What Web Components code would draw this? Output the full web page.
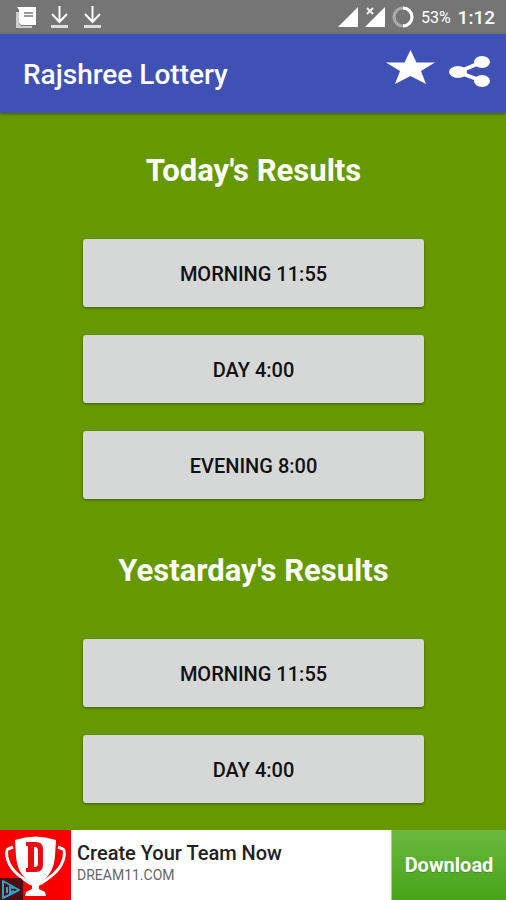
<!DOCTYPE html>
<html lang="en">
<head>
<meta charset="utf-8">
<meta name="viewport" content="width=device-width, initial-scale=1">
<title>Rajshree Lottery</title>
<style>
  body {
    margin: 0;
    font-family: Roboto, "Noto Sans", sans-serif;
    background: #669900;
  }
</style>
</head>
<body>
<lottery-app>
  <status-bar slot="status" battery="53%" time="1:12"></status-bar>
  <app-bar slot="header">Rajshree Lottery</app-bar>
  <result-section heading="Today's Results">
    <result-button>MORNING 11:55</result-button>
    <result-button>DAY 4:00</result-button>
    <result-button>EVENING 8:00</result-button>
  </result-section>
  <result-section heading="Yestarday's Results">
    <result-button>MORNING 11:55</result-button>
    <result-button>DAY 4:00</result-button>
  </result-section>
  <ad-banner slot="footer" action="Download">
    <span slot="title">Create Your Team Now</span>
    <span slot="site">DREAM11.COM</span>
  </ad-banner>
</lottery-app>

<script>
function attachTemplate(host, html) {
  const template = document.createElement("template");
  template.innerHTML = html;
  host.attachShadow({ mode: "open" });
  host.shadowRoot.appendChild(template.content.cloneNode(true));
}

class LotteryApp extends HTMLElement {
  constructor() {
    super();
    attachTemplate(this, `
      <style>
        :host {
          display: flex;
          flex-direction: column;
          min-height: 100vh;
        }
        main {
          flex: 1;
          display: flex;
          flex-direction: column;
          gap: 52px;
          padding: 38px 82px 27px 83px;
        }
      </style>
      <slot name="status"></slot>
      <slot name="header"></slot>
      <main><slot></slot></main>
      <slot name="footer"></slot>
    `);
  }
}

class StatusBar extends HTMLElement {
  constructor() {
    super();
    attachTemplate(this, `
      <style>
        :host {
          display: flex;
          align-items: center;
          justify-content: space-between;
          height: 34px;
          padding: 0 11px 0 16px;
          background: #757575;
          color: #fff;
        }
        .group {
          display: flex;
          align-items: center;
        }
        .notices { gap: 14px; }
        .system { gap: 7px; }
        svg { display: block; }
        .battery { font-size: 16px; }
        .time { font-size: 19px; font-weight: 500; }
      </style>
      <div class="group notices">
        <svg width="20" height="22" viewBox="0 0 20 22">
          <path d="M0 6h3v12l2 2h11v2H0z" fill="#ccc"/>
          <path d="M1 1h19v18H5l-2-2V4z" fill="#fff"/>
          <path d="M8 6h9v2H8zM8 9h9v2H8z" fill="#999"/>
        </svg>
        <svg width="19" height="24" viewBox="0 0 19 24" fill="none" stroke="#fff" stroke-width="2">
          <path d="M9.500 1v15M2 9l7.500 8L17 9"/>
          <path d="M1 21.500h17" stroke-width="3" stroke="#ddd"/>
        </svg>
        <svg width="19" height="24" viewBox="0 0 19 24" fill="none" stroke="#fff" stroke-width="2">
          <path d="M9.500 1v15M2 9l7.500 8L17 9"/>
          <path d="M1 21.500h17" stroke-width="3" stroke="#ddd"/>
        </svg>
      </div>
      <div class="group system">
        <svg width="20" height="20" viewBox="0 0 20 20" fill="#fff"><path d="M0 20L20 0v20z"/></svg>
        <svg width="20" height="20" viewBox="0 0 20 20">
          <path d="M0 20L20 0v20z" fill="#fff"/>
          <path d="M2 1l6 6M8 1L2 7" stroke="#757575" stroke-width="5"/>
          <path d="M2 1l6 6M8 1L2 7" stroke="#eee" stroke-width="2"/>
        </svg>
        <svg width="22" height="22" viewBox="0 0 22 22" fill="none" stroke-width="3">
          <circle cx="11" cy="11" r="9" stroke="#aaa"/>
          <path d="M11 2a9 9 0 0 1 0 18" stroke="#fff"/>
        </svg>
        <span class="battery"></span>
        <span class="time"></span>
      </div>
    `);
  }

  connectedCallback() {
    this.shadowRoot.querySelector(".battery").textContent = this.getAttribute("battery");
    this.shadowRoot.querySelector(".time").textContent = this.getAttribute("time");
  }
}

class AppBar extends HTMLElement {
  constructor() {
    super();
    attachTemplate(this, `
      <style>
        :host {
          display: flex;
          align-items: center;
          gap: 14px;
          height: 79px;
          padding: 0 15px 0 23px;
          background: #3f51b5;
          color: #fff;
          box-shadow: 0 1px 3px rgba(0, 0, 0, .4);
        }
        h1 {
          flex: 1;
          margin: 0;
          padding-top: 2px;
          font-size: 28px;
          line-height: 32px;
          font-weight: 500;
        }
        button {
          padding: 0;
          border: 0;
          background: none;
          cursor: pointer;
        }
        svg { display: block; }
      </style>
      <h1><slot></slot></h1>
      <button aria-label="Rate">
        <svg width="49" height="48" viewBox="0 0 49 48" fill="#fff">
          <path d="M24.500 0l6 12.500H49L35 21l5 13-15.500-8L9 34l5-13L0 12.500h18.500z"/>
        </svg>
      </button>
      <button aria-label="Share">
        <svg width="42" height="48" viewBox="0 0 42 48" fill="#fff">
          <path d="M9 22L33 12M9 22l24 9" stroke="#fff" stroke-width="4"/>
          <ellipse cx="9" cy="22" rx="9" ry="6"/>
          <ellipse cx="33" cy="12" rx="8" ry="6"/>
          <ellipse cx="33" cy="31" rx="8" ry="6"/>
        </svg>
      </button>
    `);
  }
}

class ResultSection extends HTMLElement {
  constructor() {
    super();
    attachTemplate(this, `
      <style>
        :host { display: block; }
        h2 {
          margin: 0 -40px 48px;
          color: #fff;
          font-size: 31px;
          line-height: 40px;
          font-weight: 700;
          text-align: center;
        }
        .list {
          display: flex;
          flex-direction: column;
          gap: 28px;
        }
      </style>
      <h2></h2>
      <div class="list"><slot></slot></div>
    `);
  }

  connectedCallback() {
    this.shadowRoot.querySelector("h2").textContent = this.getAttribute("heading");
  }
}

class ResultButton extends HTMLElement {
  constructor() {
    super();
    attachTemplate(this, `
      <style>
        :host { display: block; }
        button {
          display: block;
          width: 100%;
          height: 68px;
          padding: 2px 16px 0;
          border: 0;
          border-radius: 3px;
          background: #d6d7d7;
          color: #111;
          font: 500 20px/24px Roboto, "Noto Sans", sans-serif;
          box-shadow: 0 1px 3px rgba(0, 0, 0, .4);
          cursor: pointer;
        }
      </style>
      <button><slot></slot></button>
    `);
  }
}

class AdBanner extends HTMLElement {
  constructor() {
    super();
    attachTemplate(this, `
      <style>
        :host {
          display: flex;
          height: 70px;
          background: #fff;
        }
        svg {
          display: block;
          flex: none;
        }
        .text {
          flex: 1;
          display: flex;
          flex-direction: column;
          padding: 11px 6px 0;
        }
        .title {
          color: #212121;
          font-size: 20px;
          line-height: 24px;
          font-weight: 500;
        }
        .site {
          color: #666;
          font-size: 14px;
          line-height: 20px;
        }
        a {
          display: flex;
          align-items: center;
          justify-content: center;
          box-sizing: border-box;
          width: 115px;
          border-left: 1px solid #a5d58b;
          background: linear-gradient(#6bb93f, #47a419);
          color: #fff;
          font-size: 20px;
          font-weight: 700;
          text-decoration: none;
          text-shadow: 0 1px 1px rgba(0, 0, 0, .2);
        }
      </style>
      <svg width="71" height="70" viewBox="0 0 71 70">
        <path d="M0 0h71v70H0z" fill="#f80000"/>
        <!-- cup handles -->
        <path d="M13 17l-5 2q-2 1-1 8c2 11 10 18 24 27M58 17l5 2q2 1 1 8c-2 11-10 18-24 27" fill="none" stroke="#fff" stroke-width="3"/>
        <path d="M15 10q20-7 41 0l-1 16c-1 12-5 18-10 23l-6 7v3l6 3 1 4H25l1-4 6-3v-3l-6-7c-5-5-9-11-10-23z" fill="#fff"/>
        <path fill-rule="evenodd" d="M26 12h10q7 0 7 7v16q0 7-7 7H26v-4h2V16h-2zM34 17v20h1q3 0 3-4V21q0-4-3-4z" fill="#e80c14"/>
        <path d="M0 48h19q4 0 4 4v18H0z" fill="#4d0d12"/>
        <path d="M3 51v17l16-8z" fill="none" stroke="#26a9c9" stroke-width="2" stroke-linejoin="round"/>
        <path d="M7 57v6M14 58l-4-1v6l4-2" fill="none" stroke="#26a9c9" stroke-width="2"/>
      </svg>
      <div class="text">
        <div class="title"><slot name="title"></slot></div>
        <div class="site"><slot name="site"></slot></div>
      </div>
      <a href="#download"></a>
    `);
  }

  connectedCallback() {
    this.shadowRoot.querySelector("a").textContent = this.getAttribute("action");
  }
}

customElements.define("lottery-app", LotteryApp);
customElements.define("status-bar", StatusBar);
customElements.define("app-bar", AppBar);
customElements.define("result-section", ResultSection);
customElements.define("result-button", ResultButton);
customElements.define("ad-banner", AdBanner);
</script>
</body>
</html>
